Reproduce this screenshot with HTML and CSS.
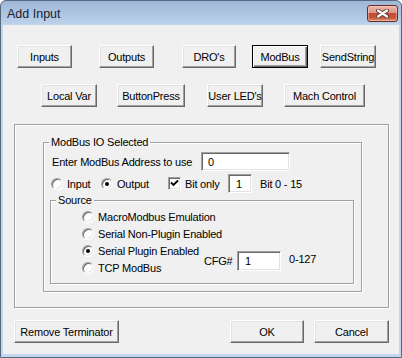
FILE: index.html
```html
<!DOCTYPE html>
<html>
<head>
<meta charset="utf-8">
<title>Add Input</title>
<link rel="stylesheet" href="styles.css">
</head>
<body>
<div class="window">
  <div class="titlebar">
    <span class="title">Add Input</span>
    <div class="close">
      <svg width="13" height="9" viewBox="0 0 13 9"><path d="M2 1.5 L11 7.5 M11 1.5 L2 7.5" stroke="#5a3a36" stroke-width="4" stroke-linecap="round"/><path d="M2 1.5 L11 7.5 M11 1.5 L2 7.5" stroke="#fff" stroke-width="2.2" stroke-linecap="round"/></svg>
    </div>
  </div>
  <div class="client">
    <div class="btnrow row1">
      <div class="btn b-inputs">Inputs</div>
      <div class="btn b-outputs">Outputs</div>
      <div class="btn b-dros">DRO's</div>
      <div class="btn default b-modbus">ModBus</div>
      <div class="btn b-send">SendString</div>
    </div>
    <div class="btnrow row2">
      <div class="btn b-local">Local Var</div>
      <div class="btn b-press">ButtonPress</div>
      <div class="btn b-leds">User LED's</div>
      <div class="btn b-mach">Mach Control</div>
    </div>
    <div class="frame">
      <div class="group io">
        <div class="legend">ModBus IO Selected</div>
        <div class="addr-row">
          <span class="addr-label">Enter ModBus Address to use</span>
          <div class="tb tb-addr">0</div>
        </div>
        <div class="opt-row">
          <div class="opt opt-input"><span class="rb"></span><span>Input</span></div>
          <div class="opt opt-output"><span class="rb on"></span><span>Output</span></div>
          <div class="opt opt-bit"><span class="cb"><svg width="9" height="9" viewBox="0 0 9 9"><path d="M1 3.5 L3.5 6 L8 1.5" stroke="#000" stroke-width="1.8" fill="none"/></svg></span><span>Bit only</span></div>
          <div class="tb tb-bit">1</div>
          <span class="bit-range">Bit 0 - 15</span>
        </div>
        <div class="group source">
          <div class="legend">Source</div>
          <div class="src-body">
            <div class="src-list">
              <div class="src-item"><span class="rb"></span><span>MacroModbus Emulation</span></div>
              <div class="src-item"><span class="rb"></span><span>Serial Non-Plugin Enabled</span></div>
              <div class="src-item"><span class="rb on"></span><span>Serial Plugin Enabled</span></div>
              <div class="src-item"><span class="rb"></span><span>TCP ModBus</span></div>
            </div>
            <div class="cfg">
              <span class="cfg-label">CFG#</span>
              <div class="tb tb-cfg">1</div>
              <span class="cfg-range">0-127</span>
            </div>
          </div>
        </div>
      </div>
    </div>
    <div class="bottom">
      <div class="btn b-remove">Remove Terminator</div>
      <div class="btn b-ok">OK</div>
      <div class="btn b-cancel">Cancel</div>
    </div>
  </div>
</div>
</body>
</html>
```

FILE: styles.css
```css
* { box-sizing: border-box; }
html, body { margin: 0; padding: 0; }
body {
  width: 402px;
  height: 358px;
  overflow: hidden;
  background: #ffffff;
  font-family: "Liberation Sans", Arial, sans-serif;
  font-size: 11px;
  letter-spacing: -0.2px;
  color: #000;
}
.window {
  width: 402px;
  height: 358px;
  border: 1px solid #56687d;
  border-radius: 6px 6px 0 0;
  background: linear-gradient(#9db7d6 0, #bcd1ea 23px, #c3d7ee 24px, #c3d7ee 100%);
  display: flex;
  flex-direction: column;
  overflow: hidden;
}
.titlebar {
  height: 24px;
  flex: none;
  display: flex;
  align-items: center;
  justify-content: space-between;
  padding: 0 3px 0 6px;
}
.title {
  font-size: 12.5px;
  letter-spacing: 0;
  color: #1b1b2e;
  margin-top: 1px;
}
.close {
  width: 31px;
  height: 17px;
  border: 1px solid #6e2b23;
  border-radius: 3px;
  background: linear-gradient(#e9b7ab 0, #dc9584 45%, #c44a34 50%, #c55439 78%, #e09a7a 100%);
  box-shadow: inset 0 0 0 1px rgba(255, 220, 210, 0.45);
  display: flex;
  align-items: center;
  justify-content: center;
  margin-top: 1px;
}
.close svg { display: block; }
.client {
  flex: 1;
  margin: 0 2px 3px 2px;
  background: #f0f0f0;
  padding-top: 20px;
  display: flex;
  flex-direction: column;
}
.btnrow { display: flex; height: 23px; flex: none; }
.row1 { margin-left: 14px; }
.row2 { margin-left: 38px; margin-top: 16px; }
.btn {
  height: 23px;
  display: flex;
  align-items: center;
  justify-content: center;
  background: #f0f0f0;
  border: 1px solid;
  border-color: #ffffff #696969 #696969 #ffffff;
  box-shadow: inset -1px -1px 0 #a0a0a0, inset 1px 1px 0 #e3e3e3;
  white-space: nowrap;
  flex: none;
}
.btn.default {
  border: 1px solid #000;
  box-shadow: inset 1px 1px 0 #ffffff, inset -1px -1px 0 #696969, inset -2px -2px 0 #a0a0a0;
}
.b-inputs { width: 55px; }
.b-outputs { width: 55px; margin-left: 27px; }
.b-dros { width: 54px; margin-left: 28px; }
.b-modbus { width: 56px; margin-left: 16px; }
.b-send { width: 56px; margin-left: 12px; }
.b-local { width: 56px; }
.b-press { width: 68px; margin-left: 20px; }
.b-leds { width: 56px; margin-left: 22px; }
.b-mach { width: 81px; margin-left: 21px; }

.frame {
  flex: none;
  margin: 17px 0 0 11px;
  width: 375px;
  height: 184px;
  border: 1px solid #a0a0a0;
  box-shadow: inset 1px 1px 0 #ffffff, 1px 1px 0 #ffffff;
  padding: 17px 0 0 28px;
}
.group {
  border: 1px solid #a0a0a0;
  box-shadow: inset 1px 1px 0 #ffffff, 1px 1px 0 #ffffff;
  display: flex;
  flex-direction: column;
}
.legend {
  width: fit-content;
  margin: -7px 0 0 5px;
  padding: 0 2px;
  line-height: 13px;
  height: 13px;
  background: #f0f0f0;
  white-space: nowrap;
}
.io { width: 319px; height: 150px; }
.addr-row {
  display: flex;
  align-items: center;
  height: 19px;
  margin-top: 3px;
  padding-left: 8px;
}
.addr-label { width: 149px; white-space: nowrap; }
.tb {
  height: 19px;
  background: #ffffff;
  border: 1px solid;
  border-color: #a0a0a0 #ffffff #ffffff #a0a0a0;
  box-shadow: inset 1px 1px 0 #696969, inset -1px -1px 0 #e3e3e3;
  display: flex;
  align-items: center;
  padding-left: 7px;
  flex: none;
}
.tb-addr { width: 89px; padding-left: 6px; }
.opt-row {
  display: flex;
  align-items: center;
  height: 19px;
  margin-top: 3px;
  padding-left: 7px;
}
.opt { display: flex; align-items: center; gap: 4px; white-space: nowrap; flex: none; }
.opt-input { width: 50px; }
.opt-output { width: 67px; }
.opt-bit { width: 60px; gap: 4px; }
.tb-bit { width: 24px; }
.bit-range { margin-left: 8px; white-space: nowrap; }
.rb {
  width: 12px;
  height: 12px;
  flex: none;
  border-radius: 50%;
  border: 1px solid;
  border-color: #a0a0a0 #ffffff #ffffff #a0a0a0;
  background: #ffffff;
  box-shadow: inset 1px 1px 0 #696969, inset -1px -1px 0 #e3e3e3;
  display: flex;
  align-items: center;
  justify-content: center;
}
.rb.on::after {
  content: "";
  width: 4px;
  height: 4px;
  border-radius: 50%;
  background: #000;
}
.cb {
  width: 13px;
  height: 13px;
  flex: none;
  border: 1px solid;
  border-color: #a0a0a0 #ffffff #ffffff #a0a0a0;
  background: #ffffff;
  box-shadow: inset 1px 1px 0 #696969, inset -1px -1px 0 #e3e3e3;
  display: flex;
  align-items: center;
  justify-content: center;
}
.cb svg { display: block; }
.source {
  width: 304px;
  height: 84px;
  margin: 7px 0 0 6px;
}
.src-body {
  display: flex;
  align-items: flex-start;
  margin-top: 1px;
  padding-left: 31px;
}
.src-list { width: 122px; flex: none; display: flex; flex-direction: column; }
.src-item {
  height: 17px;
  display: flex;
  align-items: center;
  gap: 4px;
  white-space: nowrap;
}
.cfg {
  display: flex;
  align-items: center;
  margin-top: 43px;
  white-space: nowrap;
}
.cfg-label { width: 33px; }
.tb-cfg { width: 44px; height: 20px; }
.cfg-range { margin-left: 8px; margin-top: -4px; }
.bottom {
  display: flex;
  margin: 12px 0 0 11px;
}
.b-remove { width: 105px; }
.b-ok { width: 74px; margin-left: 111px; }
.b-cancel { width: 75px; margin-left: 10px; }
```
